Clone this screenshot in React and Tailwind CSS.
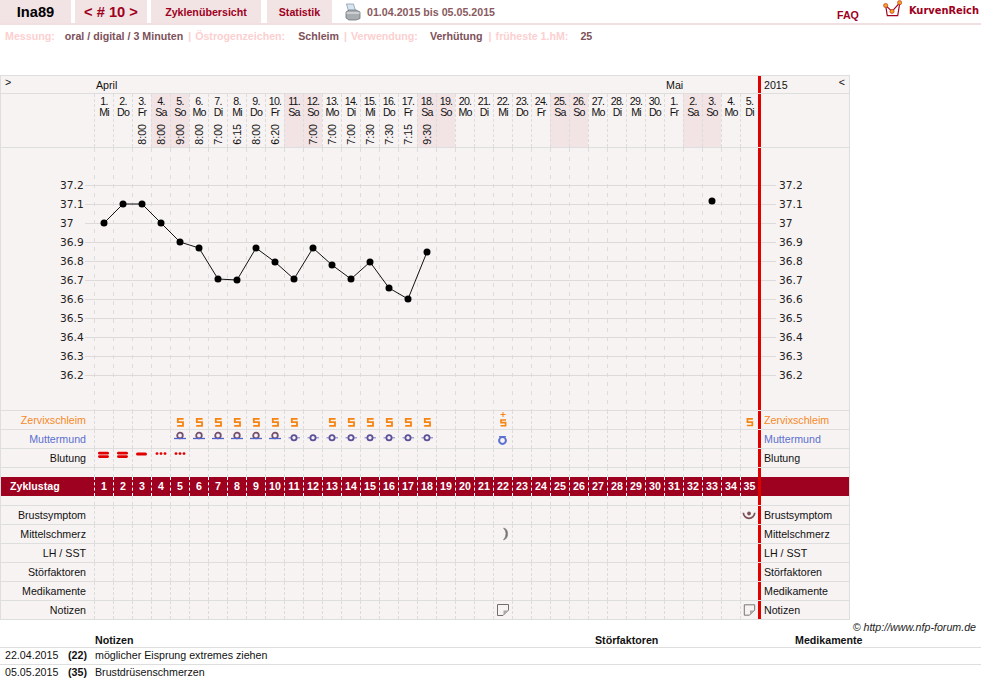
const days = [
  ['1.', 'Mi', ''], ['2.', 'Do', ''], ['3.', 'Fr', '8:00'], ['4.', 'Sa', '8:00'], ['5.', 'So', '9:00'],
  ['6.', 'Mo', '8:00'], ['7.', 'Di', '7:00'], ['8.', 'Mi', '6:15'], ['9.', 'Do', '8:00'], ['10.', 'Fr', '6:20'],
  ['11.', 'Sa', ''], ['12.', 'So', '7:00'], ['13.', 'Mo', '7:00'], ['14.', 'Di', '7:00'], ['15.', 'Mi', '7:30'],
  ['16.', 'Do', '7:30'], ['17.', 'Fr', '7:15'], ['18.', 'Sa', '9:30'], ['19.', 'So', ''], ['20.', 'Mo', ''],
  ['21.', 'Di', ''], ['22.', 'Mi', ''], ['23.', 'Do', ''], ['24.', 'Fr', ''], ['25.', 'Sa', ''],
  ['26.', 'So', ''], ['27.', 'Mo', ''], ['28.', 'Di', ''], ['29.', 'Mi', ''], ['30.', 'Do', ''],
  ['1.', 'Fr', ''], ['2.', 'Sa', ''], ['3.', 'So', ''], ['4.', 'Mo', ''], ['5.', 'Di', ''],
];

const temps = ['37.2', '37.1', '37', '36.9', '36.8', '36.7', '36.6', '36.5', '36.4', '36.3', '36.2'];
const curve = [223, 204, 204, 223, 242, 248, 279, 280, 248, 262, 279, 248, 265, 279, 262, 288, 299, 252];

function Icon({ children }) {
  return <svg width="18" height="18" viewBox="0 0 18 18" fill="none">{children}</svg>;
}

const sPlain = <Icon><path d="M12.6 7.8H6.8V11.2H12V14.8H6.2" stroke="#f58410" strokeWidth="1.8" /></Icon>;
const sPlus = (
  <Icon>
    <path d="M12 9H7V11.6H11.6V14.8H6.5" stroke="#f58410" strokeWidth="1.6" />
    <path d="M6.5 3.5H11.5M9 1V6" stroke="#f58410" strokeWidth="1" />
  </Icon>
);
const mouthHigh = (
  <Icon>
    <circle cx="9" cy="5.5" r="2.8" stroke="#75506e" strokeWidth="1.8" />
    <path d="M3 8.5H15" stroke="#4f66d0" strokeWidth="1.3" />
  </Icon>
);
const mouthMid = (
  <Icon>
    <path d="M3.5 7.8H15" stroke="#7f88d0" strokeWidth="1.1" />
    <circle cx="9" cy="7.8" r="2.6" fill="#f8f3f3" stroke="#5c5098" strokeWidth="1.8" />
  </Icon>
);
const mouthOpen = (
  <Icon>
    <circle cx="8.5" cy="10.5" r="3.4" stroke="#5a70d0" strokeWidth="2" />
    <path d="M5 6.6H12" stroke="#5a70d0" strokeWidth="1" />
  </Icon>
);
const bleedHeavy = (
  <Icon>
    <rect x="3" y="2.8" width="11" height="2.8" rx="1.4" fill="#e00000" />
    <rect x="3" y="6.2" width="11" height="2.8" rx="1.4" fill="#e00000" />
  </Icon>
);
const bleedMid = <Icon><rect x="3" y="3.4" width="11" height="3" rx="1.5" fill="#e00000" /></Icon>;
const bleedLight = (
  <Icon>
    <circle cx="5" cy="4.6" r="1.4" fill="#e00000" />
    <circle cx="9" cy="4.6" r="1.4" fill="#e00000" />
    <circle cx="13" cy="4.6" r="1.4" fill="#e00000" />
  </Icon>
);
const breast = (
  <Icon>
    <path d="M2.5 6.5a6 6 0 0 0 12 0" stroke="#7d5158" strokeWidth="1.8" />
    <circle cx="8.5" cy="7.4" r="2" fill="#7d5158" />
  </Icon>
);
const midPain = <Icon><path d="M9.5 3Q13.6 3.8 13.6 8.8T9.5 15Q12 12 12 8.8T9.5 3Z" fill="#777" stroke="#777" strokeWidth="0.6" /></Icon>;
const note = (
  <Icon>
    <path d="M3.5 3.5H14.5V9L9 14.5H3.5Z" fill="#f8f3f3" stroke="#6f6f6f" />
    <path d="M14 9.5H9.5V14Z" fill="#a8a8a8" />
  </Icon>
);

function Cells({ icons = {}, light }) {
  return days.map((_, i) => (
    <div
      key={i}
      className={`${i === 34 ? 'w-[18px]' : 'w-[19px]'} shrink-0 border-l border-dashed ${light ? 'border-white' : 'border-[#dcdcdc]'} flex justify-start`}
    >
      {icons[i + 1]}
    </div>
  ));
}

function Row({ label, labelColor = 'text-[#111]', icons }) {
  return (
    <div className="flex h-[19px] border-b border-[#dedede] leading-[18px]">
      <div className={`w-[93px] shrink-0 text-right pr-[8px] ${labelColor}`}>{label}</div>
      <Cells icons={icons} />
      <div className="w-[3px] shrink-0 bg-[#e00000]" />
      <div className={`w-[88px] shrink-0 pl-[3px] ${labelColor}`}>{label}</div>
    </div>
  );
}

function DateHeader() {
  return (
    <div className="flex h-[54px] border-b border-[#dedede]">
      <div className="w-[93px] shrink-0" />
      {days.map((d, i) => (
        <div
          key={i}
          className={`${i === 34 ? 'w-[18px]' : 'w-[19px]'} shrink-0 border-l border-dashed border-[#dcdcdc] flex flex-col items-center justify-between pt-[2px] pb-[2px] text-[10.67px] leading-[10.5px] tracking-[-0.8px] text-[#111] ${d[1] === 'Sa' || d[1] === 'So' ? 'bg-[#f2e3e5]' : ''}`}
        >
          <div className="text-center whitespace-nowrap">
            {d[0]}
            <br />
            {d[1]}
          </div>
          {d[2] && <div className="[writing-mode:vertical-rl] rotate-180 tracking-normal leading-[12px]">{d[2]}</div>}
        </div>
      ))}
      <div className="w-[3px] shrink-0 bg-[#e00000]" />
      <div className="w-[88px] shrink-0" />
    </div>
  );
}

function Chart() {
  const labelFont = { fontFamily: '"DejaVu Sans", sans-serif', fontSize: 10.67 };
  return (
    <div className="flex h-[263px] border-b border-[#dedede]">
      <svg width="757" height="262" viewBox="1 148 757 262" className="shrink-0">
        {days.map((_, i) => (
          <line key={i} x1={94.5 + 19 * i} x2={94.5 + 19 * i} y1="148" y2="410" stroke="#dcdcdc" strokeDasharray="4 5" />
        ))}
        {temps.map((t, i) => (
          <g key={t}>
            <line x1="85" x2="758" y1={185.5 + 19 * i} y2={185.5 + 19 * i} stroke="#dedada" />
            <text x="60" y={189 + 19 * i} fill="#222" style={labelFont}>{t}</text>
          </g>
        ))}
        <polyline
          points={curve.map((y, i) => `${104 + 19 * i},${y}`).join(' ')}
          fill="none"
          stroke="#111"
          strokeWidth="1"
        />
        {curve.map((y, i) => (
          <circle key={i} cx={104 + 19 * i} cy={y} r="3.5" fill="#000" />
        ))}
        <circle cx="712" cy="201" r="3.5" fill="#000" />
      </svg>
      <div className="w-[3px] shrink-0 bg-[#e00000]" />
      <svg width="88" height="262" viewBox="761 148 88 262" className="shrink-0">
        {temps.map((t, i) => (
          <g key={t}>
            <line x1="761" x2="776" y1={185.5 + 19 * i} y2={185.5 + 19 * i} stroke="#dedada" />
            <text x="779" y={189 + 19 * i} fill="#222" style={labelFont}>{t}</text>
          </g>
        ))}
      </svg>
    </div>
  );
}

function Printer() {
  return (
    <svg width="16" height="18" viewBox="0 0 16 18" className="ml-[13px] mt-[3px]">
      <path d="M1.5 1H8.5L10.5 8H3.5Z" fill="#d5e6f2" stroke="#8a9aa8" strokeWidth="0.8" />
      <path d="M1 9L4 7H11L15 9V15.5L11 17H4L1 15Z" fill="#a9adb2" stroke="#6f7479" strokeWidth="0.8" />
      <path d="M1.5 10H14.5" stroke="#e4e6e8" strokeWidth="1.2" />
    </svg>
  );
}

function Logo() {
  return (
    <svg width="19" height="19" viewBox="0 0 20 20" className="shrink-0">
      <path d="M3 7L4.5 16.5H15.5L17.5 4" fill="none" stroke="#9e0020" strokeWidth="1.2" />
      <path d="M3 6L9.5 12L17.5 3" fill="none" stroke="#9e0020" strokeWidth="1.2" />
      <circle cx="2.8" cy="5.8" r="2.2" fill="#f5a020" stroke="#c03020" strokeWidth="0.7" />
      <circle cx="9.5" cy="12" r="2.2" fill="#f5a020" stroke="#c03020" strokeWidth="0.7" />
      <circle cx="17.5" cy="2.8" r="2.2" fill="#f5a020" stroke="#c03020" strokeWidth="0.7" />
    </svg>
  );
}

export default function App() {
  return (
    <div className="w-[981px] bg-white font-['Liberation_Sans',Arial,sans-serif] text-[10.67px] text-[#111]">
      <div className="flex h-[25px] border-b-2 border-[#f2dfe2]">
        <div className="w-[71px] bg-[#f2e3e5] text-center text-[14.67px] font-bold leading-[24px] text-black">Ina89</div>
        <div className="w-[72px] ml-[4px] bg-[#f2e3e5] text-center text-[14.67px] font-bold leading-[24px] text-[#9e0020]">&lt; # 10 &gt;</div>
        <div className="w-[110px] ml-[4px] bg-[#f2e3e5] text-center font-bold leading-[24px] text-[#9e0020]">Zyklenübersicht</div>
        <div className="w-[65px] ml-[6px] bg-[#f2e3e5] text-center font-bold leading-[24px] text-[#9e0020]">Statistik</div>
        <Printer />
        <div className="ml-[6px] font-bold leading-[24px] text-[#8a5a60]">01.04.2015 bis 05.05.2015</div>
        <div className="ml-auto mt-[3px] font-bold leading-[24px] text-[#9e0020]">FAQ</div>
        <div className="ml-[24px] flex gap-[7px]">
          <Logo />
          <span className="font-['DejaVu_Sans',sans-serif] text-[9.9px] font-bold leading-[21px] text-[#9e0020] pr-[2px]">KurvenReich</span>
        </div>
      </div>

      <div className="flex h-[50px] pl-[5px] pt-[4px] font-bold leading-[14px] text-[#fcd0d0]">
        <span>Messung:</span>
        <span className="ml-[10px] text-[#7d5158]">oral / digital / 3 Minuten</span>
        <span className="ml-[5px]">|</span>
        <span className="ml-[4px]">Östrogenzeichen:</span>
        <span className="ml-[13px] text-[#7d5158]">Schleim</span>
        <span className="ml-[5px]">|</span>
        <span className="ml-[4px]">Verwendung:</span>
        <span className="ml-[12px] text-[#7d5158]">Verhütung</span>
        <span className="ml-[6px]">|</span>
        <span className="ml-[4px]">früheste 1.hM:</span>
        <span className="ml-[12px] text-[#7d5158]">25</span>
      </div>

      <div className="w-[850px] border-x border-t border-[#dedede] bg-[#f8f3f3]">
        <div className="flex h-[18px] border-b border-[#dedede] leading-[19px]">
          <div className="w-[93px] shrink-0 pl-[4px] leading-[12px]">&gt;</div>
          <div className="w-[572px] shrink-0 pl-[2px]">April</div>
          <div className="w-[92px] shrink-0">Mai</div>
          <div className="w-[3px] shrink-0 bg-[#e00000]" />
          <div className="w-[88px] shrink-0 pl-[3px] pr-[4px] flex justify-between">
            <span>2015</span>
            <span className="leading-[12px]">&lt;</span>
          </div>
        </div>
        <DateHeader />
        <Chart />
        <Row
          label="Zervixschleim"
          labelColor="text-[#f58a1f]"
          icons={{
            5: sPlain, 6: sPlain, 7: sPlain, 8: sPlain, 9: sPlain, 10: sPlain, 11: sPlain,
            13: sPlain, 14: sPlain, 15: sPlain, 16: sPlain, 17: sPlain, 18: sPlain, 22: sPlus, 35: sPlain,
          }}
        />
        <Row
          label="Muttermund"
          labelColor="text-[#5a70d0]"
          icons={{
            5: mouthHigh, 6: mouthHigh, 7: mouthHigh, 8: mouthHigh, 9: mouthHigh, 10: mouthHigh,
            11: mouthMid, 12: mouthMid, 13: mouthMid, 14: mouthMid, 15: mouthMid, 16: mouthMid, 17: mouthMid, 18: mouthMid,
            22: mouthOpen,
          }}
        />
        <Row label="Blutung" icons={{ 1: bleedHeavy, 2: bleedHeavy, 3: bleedMid, 4: bleedLight, 5: bleedLight }} />
        <div className="flex h-[9px]">
          <div className="w-[93px] shrink-0" />
          <Cells />
          <div className="w-[3px] shrink-0 bg-[#e00000]" />
        </div>
        <div className="flex h-[19px] bg-[#9e0020] font-bold text-white leading-[19px]">
          <div className="w-[93px] shrink-0 pl-[9px]">Zyklustag</div>
          {days.map((_, i) => (
            <div key={i} className={`${i === 34 ? 'w-[18px]' : 'w-[19px]'} shrink-0 border-l border-dashed border-white text-center`}>
              {i + 1}
            </div>
          ))}
          <div className="w-[3px] shrink-0 bg-[#e00000]" />
        </div>
        <div className="flex h-[10px] border-b border-[#dedede]">
          <div className="w-[93px] shrink-0" />
          <Cells />
          <div className="w-[3px] shrink-0 bg-[#e00000]" />
        </div>
        <Row label="Brustsymptom" icons={{ 35: breast }} />
        <Row label="Mittelschmerz" icons={{ 22: midPain }} />
        <Row label="LH / SST" />
        <Row label="Störfaktoren" />
        <Row label="Medikamente" />
        <Row label="Notizen" icons={{ 22: note, 35: note }} />
      </div>

      <div className="h-[14px] pr-[5px] text-right italic leading-[14px] text-[#222]">© http://www.nfp-forum.de</div>
      <div className="flex h-[14px] border-b border-[#dedede] font-bold leading-[13px]">
        <div className="w-[95px] shrink-0" />
        <div className="w-[500px] shrink-0">Notizen</div>
        <div className="w-[200px] shrink-0">Störfaktoren</div>
        <div>Medikamente</div>
      </div>
      <div className="flex h-[17px] border-b border-[#dedede] leading-[14px]">
        <div className="w-[63px] shrink-0 pl-[5px]">22.04.2015</div>
        <div className="w-[32px] shrink-0 pl-[5px] font-bold">(22)</div>
        <div>möglicher Eisprung extremes ziehen</div>
      </div>
      <div className="flex h-[17px] leading-[14px]">
        <div className="w-[63px] shrink-0 pl-[5px]">05.05.2015</div>
        <div className="w-[32px] shrink-0 pl-[5px] font-bold">(35)</div>
        <div>Brustdrüsenschmerzen</div>
      </div>
    </div>
  );
}
